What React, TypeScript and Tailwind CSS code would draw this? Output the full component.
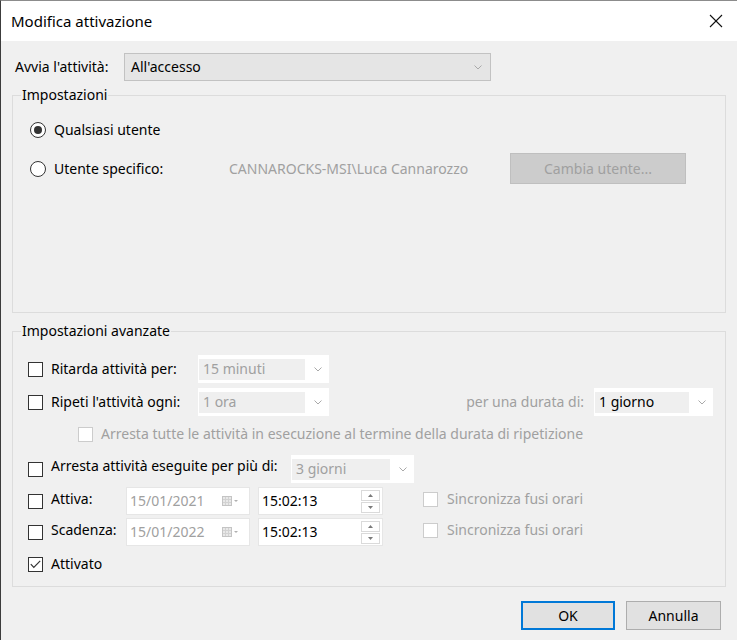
import React from "react";

function Chevron() {
  return (
    <svg width="8" height="5" viewBox="0 0 8 5">
      <polyline points="0.5,0.5 4,4 7.5,0.5" fill="none" stroke="#a9a9a9" strokeWidth="1" />
    </svg>
  );
}

function Check({ checked = false, disabled = false }: { checked?: boolean; disabled?: boolean }) {
  return (
    <div
      className={
        "w-[15px] h-[15px] shrink-0 bg-white border flex items-center justify-center " +
        (disabled ? "border-[#cccccc]" : "border-[#333333]")
      }
    >
      {checked && (
        <svg width="11" height="9" viewBox="0 0 11 9">
          <polyline points="0.8,4.2 3.8,7.4 10.2,0.8" fill="none" stroke="#333" strokeWidth="1.2" />
        </svg>
      )}
    </div>
  );
}

function Radio({ checked = false }: { checked?: boolean }) {
  return (
    <div className="w-[16px] h-[16px] shrink-0 rounded-full bg-white border border-[#333333] flex items-center justify-center">
      {checked && <div className="w-[8px] h-[8px] rounded-full bg-[#333333]" />}
    </div>
  );
}

function DisCombo({ w, text, dark = false }: { w: string; text: string; dark?: boolean }) {
  return (
    <div className={w + " h-[28px] bg-white flex items-center pl-[1px] pr-[7px] shrink-0"}>
      <div
        className={
          "h-[21px] flex-1 bg-[#efefef] flex items-center pl-[4px] mr-[9px] " +
          (dark ? "text-black" : "text-[#a0a0a0]")
        }
      >
        {text}
      </div>
      <Chevron />
    </div>
  );
}

function CalIcon() {
  return (
    <svg width="18" height="10" viewBox="0 0 18 10">
      <rect x="0.5" y="0.5" width="9" height="9" fill="#e8e8e8" stroke="#c4c4c4" />
      <line x1="3.5" y1="1" x2="3.5" y2="9" stroke="#d2d2d2" />
      <line x1="6.5" y1="1" x2="6.5" y2="9" stroke="#d2d2d2" />
      <line x1="1" y1="3.5" x2="9" y2="3.5" stroke="#d2d2d2" />
      <line x1="1" y1="6.5" x2="9" y2="6.5" stroke="#d2d2d2" />
      <polygon points="12,4 16,4 14,6" fill="#b0b0b0" />
    </svg>
  );
}

function DateBox({ text }: { text: string }) {
  return (
    <div className="w-[124px] h-[28px] bg-white border border-[#e6e6e6] flex items-center pl-[3px] pr-[9px] shrink-0">
      <span className="flex-1 text-[#a0a0a0]">{text}</span>
      <CalIcon />
    </div>
  );
}

function TimeBox({ text }: { text: string }) {
  return (
    <div className="w-[125px] h-[28px] bg-white border border-[#e6e6e6] flex items-center pl-[3px] pr-[2px] shrink-0">
      <span className="flex-1 text-black">{text}</span>
      <div className="flex flex-col gap-[1px]">
        <div className="w-[19px] h-[11px] border border-[#dadada] flex items-center justify-center">
          <svg width="5" height="3" viewBox="0 0 5 3">
            <polygon points="0,3 5,3 2.5,0" fill="#7a7a7a" />
          </svg>
        </div>
        <div className="w-[19px] h-[11px] border border-[#dadada] flex items-center justify-center">
          <svg width="5" height="3" viewBox="0 0 5 3">
            <polygon points="0,0 5,0 2.5,3" fill="#7a7a7a" />
          </svg>
        </div>
      </div>
    </div>
  );
}

export default function App() {
  return (
    <div className="w-[737px] h-[640px] flex flex-col border-l border-t border-l-[#3c3c3c] border-t-[#8c8c8c] bg-[#f0f0f0] text-[14px] leading-[20px] text-black font-['Noto_Sans',sans-serif] overflow-hidden">
      <div className="h-[40px] bg-white flex items-center pl-[10px] pr-[14px] shrink-0">
        <span className="flex-1 text-[15px]">Modifica attivazione</span>
        <svg width="14" height="14" viewBox="0 0 14 14">
          <line x1="1" y1="1" x2="13" y2="13" stroke="#111" strokeWidth="1.1" />
          <line x1="13" y1="1" x2="1" y2="13" stroke="#111" strokeWidth="1.1" />
        </svg>
      </div>

      <div className="flex flex-col px-[11px]">
        <div className="mt-[12px] h-[28px] flex items-center">
          <span className="w-[112px] pl-[3px]">Avvia l'attività:</span>
          <div className="w-[367px] h-[28px] bg-[#e5e5e5] border border-[#c2c2c2] flex items-center pl-[6px] pr-[8px]">
            <span className="flex-1">All'accesso</span>
            <Chevron />
          </div>
        </div>

        <fieldset className="mt-[4px] h-[228px] border border-[#dcdcdc] flex flex-col">
          <legend className="ml-[8px] px-[1px] h-[20px]">Impostazioni</legend>
          <div className="mt-[13px] h-[24px] flex items-center pl-[17px]">
            <Radio checked />
            <span className="ml-[8px]">Qualsiasi utente</span>
          </div>
          <div className="mt-[11px] h-[31px] flex items-center pl-[17px]">
            <Radio />
            <span className="ml-[8px] w-[175px]">Utente specifico:</span>
            <span className="w-[281px] text-[#a0a0a0]">CANNAROCKS-MSI\Luca Cannarozzo</span>
            <div className="w-[176px] h-[31px] bg-[#cccccc] border border-[#bfbfbf] flex items-center justify-center text-[#a0a0a0]">
              Cambia utente...
            </div>
          </div>
        </fieldset>

        <fieldset className="mt-[8px] h-[266px] border border-[#dcdcdc] flex flex-col">
          <legend className="ml-[8px] px-[1px] h-[20px]">Impostazioni avanzate</legend>

          <div className="mt-[14px] h-[28px] flex items-center pl-[15px]">
            <Check />
            <span className="ml-[8px] w-[147px]">Ritarda attività per:</span>
            <DisCombo w="w-[131px]" text="15 minuti" />
          </div>

          <div className="mt-[5px] h-[28px] flex items-center pl-[15px]">
            <Check />
            <span className="ml-[8px] w-[147px]">Ripeti l'attività ogni:</span>
            <DisCombo w="w-[131px]" text="1 ora" />
            <span className="w-[265px] text-right pr-[10px] text-[#a0a0a0]">per una durata di:</span>
            <DisCombo w="w-[119px]" text="1 giorno" dark />
          </div>

          <div className="mt-[8px] h-[20px] flex items-center pl-[65px]">
            <Check disabled />
            <span className="ml-[8px] text-[#a0a0a0]">
              Arresta tutte le attività in esecuzione al termine della durata di ripetizione
            </span>
          </div>

          <div className="mt-[11px] h-[28px] flex items-center pl-[15px]">
            <Check />
            <span className="ml-[8px] w-[240px] -mt-[6px]">Arresta attività eseguite per più di:</span>
            <DisCombo w="w-[123px]" text="3 giorni" />
          </div>

          <div className="mt-[4px] h-[28px] flex items-center pl-[15px]">
            <Check />
            <span className="ml-[8px] w-[75px] -mt-[4px]">Attiva:</span>
            <DateBox text="15/01/2021" />
            <div className="w-[8px]" />
            <TimeBox text="15:02:13" />
            <div className="ml-[40px] flex items-center -mt-[4px]">
              <Check disabled />
              <span className="ml-[9px] text-[#a0a0a0]">Sincronizza fusi orari</span>
            </div>
          </div>

          <div className="mt-[3px] h-[28px] flex items-center pl-[15px]">
            <Check />
            <span className="ml-[8px] w-[75px] -mt-[4px]">Scadenza:</span>
            <DateBox text="15/01/2022" />
            <div className="w-[8px]" />
            <TimeBox text="15:02:13" />
            <div className="ml-[40px] flex items-center -mt-[4px]">
              <Check disabled />
              <span className="ml-[9px] text-[#a0a0a0]">Sincronizza fusi orari</span>
            </div>
          </div>

          <div className="mt-[8px] h-[20px] flex items-center pl-[15px]">
            <Check checked />
            <span className="ml-[8px]">Attivato</span>
          </div>
        </fieldset>

        <div className="mt-[14px] flex justify-end gap-[11px] pr-[5px]">
          <div className="w-[94px] h-[29px] bg-[#e1e1e1] border-2 border-[#0078d7] flex items-center justify-center">
            OK
          </div>
          <div className="w-[95px] h-[29px] bg-[#e1e1e1] border border-[#adadad] flex items-center justify-center">
            Annulla
          </div>
        </div>
      </div>
    </div>
  );
}
